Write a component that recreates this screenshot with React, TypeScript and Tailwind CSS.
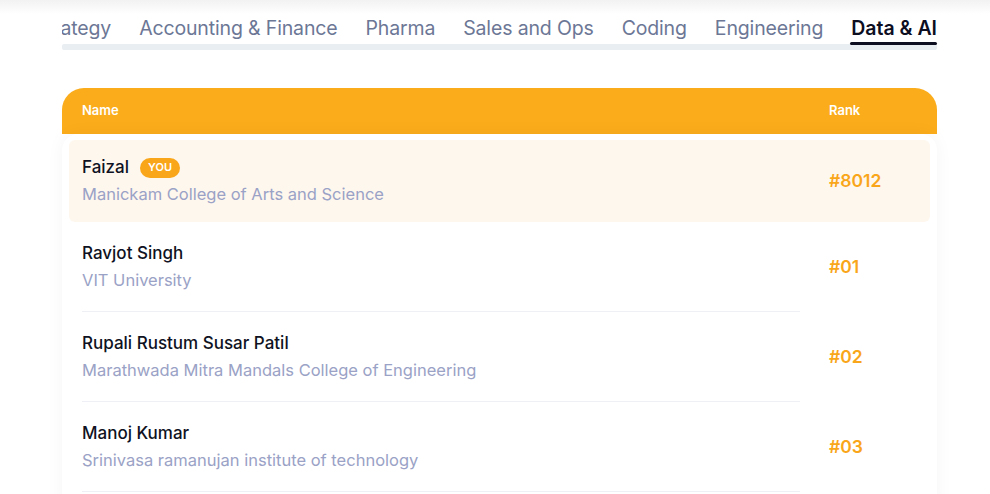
import React from "react";

const tabs = ["Strategy", "Accounting & Finance", "Pharma", "Sales and Ops", "Coding", "Engineering", "Data & AI"];

const rows = [
  { name: "Ravjot Singh", college: "VIT University", rank: "#01" },
  { name: "Rupali Rustum Susar Patil", college: "Marathwada Mitra Mandals College of Engineering", rank: "#02" },
  { name: "Manoj Kumar", college: "Srinivasa ramanujan institute of technology", rank: "#03" },
];

export default function App() {
  return (
    <div
      className="w-[990px] h-[494px] overflow-hidden bg-white relative"
      style={{ fontFamily: "Inter, 'Noto Sans', sans-serif" }}
    >
      <div className="h-[14px] bg-gradient-to-b from-[#f2f2f2] to-white" />
      <div className="ml-[62px] w-[875px]">
        <div className="flex justify-end gap-[28px] overflow-hidden h-[30px]">
          {tabs.map((t) => {
            const active = t === "Data & AI";
            return (
              <div key={t} className="shrink-0 relative">
                <span
                  className={
                    "text-[19.5px] leading-[28px] whitespace-nowrap " +
                    (active
                      ? "text-[#0d0e1f] font-semibold tracking-[0px]"
                      : "text-[#6c7796] tracking-[-0.15px]")
                  }
                >
                  {t}
                </span>
              </div>
            );
          })}
        </div>
        <div className="relative h-[6px] bg-[#e9eef3] rounded-[2px]">
          <div className="absolute right-0 -top-[2px] w-[87px] h-[3px] rounded-full bg-[#0d0e1f]" />
        </div>
      </div>

      <div className="ml-[62px] w-[875px] mt-[38px]">
        <div className="h-[46px] bg-[#faac1b] rounded-t-[22px] flex items-center text-white text-[13px] font-semibold">
          <div className="flex-1 pl-[20px]">Name</div>
          <div className="w-[137px] pl-[29px]">Rank</div>
        </div>
        <div className="bg-white rounded-t-[16px] shadow-[0_0_18px_rgba(0,0,0,0.045)] px-[7px] pt-[6px] h-[400px]">
          <div className="flex items-center h-[82px] bg-[#fef7ee] rounded-[6px]">
            <div className="flex-1 pl-[13px]">
              <div className="flex items-center gap-[11px] h-[27px]">
                <span className="text-[17px] font-medium text-[#0f1222]">Faizal</span>
                <span className="bg-[#f9a61a] text-white text-[11px] font-semibold rounded-full h-[20px] w-[40px] flex items-center justify-center">
                  YOU
                </span>
              </div>
              <div className="text-[16.5px] leading-[27px] text-[#9aa2c6]">Manickam College of Arts and Science</div>
            </div>
            <div className="w-[130px] pl-[29px] text-[17.5px] font-semibold text-[#f9a61a]">#8012</div>
          </div>
          {rows.map((r) => (
            <div key={r.rank} className="flex items-stretch h-[90px]">
              <div className="flex-1 pl-[13px]">
                <div className="h-full border-b border-[#eef0f5] flex flex-col justify-center pt-[1px]">
                  <div className="text-[17px] leading-[26px] font-medium text-[#0f1222]">{r.name}</div>
                  <div className="text-[16.5px] leading-[28px] text-[#9aa2c6]">{r.college}</div>
                </div>
              </div>
              <div className="w-[130px] pl-[29px] flex items-center text-[17.5px] font-semibold text-[#f9a61a]">
                {r.rank}
              </div>
            </div>
          ))}
        </div>
      </div>
    </div>
  );
}
